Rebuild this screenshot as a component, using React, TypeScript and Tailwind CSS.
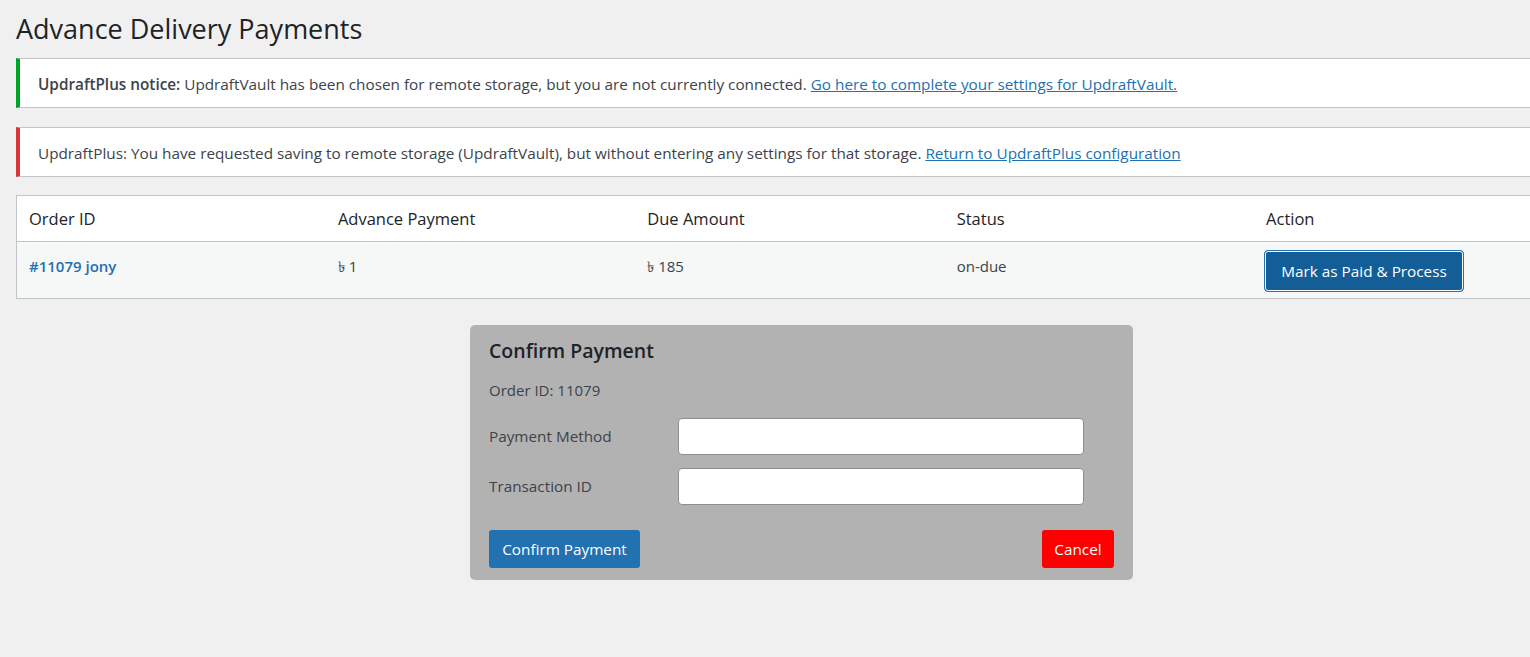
export default function App() {
  const font = { fontFamily: '"Open Sans", "Noto Sans", sans-serif' };
  return (
    <div className="h-[657px] w-[1530px] overflow-hidden bg-[#f0f0f1] text-[#3c434a]" style={font}>
      <div className="w-[1560px] pl-4">
        <h1 className="pt-[11px] text-[27px] leading-[36px] font-normal text-[#1d2327]">
          Advance Delivery Payments
        </h1>

        <div className="mt-[11px] flex h-[50px] items-center border border-l-4 border-[#c3c4c7] border-l-[#00a32a] bg-white pt-[2px] pl-[18px] text-[15.3px]">
          <p>
            <strong className="font-semibold">UpdraftPlus notice:</strong> UpdraftVault has been chosen for remote
            storage, but you are not currently connected.{" "}
            <a href="#" className="text-[#2271b1] underline">
              Go here to complete your settings for UpdraftVault.
            </a>
          </p>
        </div>

        <div className="mt-[19px] flex h-[50px] items-center border border-l-4 border-[#c3c4c7] border-l-[#d63638] bg-white pt-[2px] pl-[18px] text-[15.3px]">
          <p>
            UpdraftPlus: You have requested saving to remote storage (UpdraftVault), but without entering any
            settings for that storage.{" "}
            <a href="#" className="text-[#2271b1] underline">
              Return to UpdraftPlus configuration
            </a>
          </p>
        </div>

        <table className="mt-[18px] w-[1548px] table-fixed border border-[#c3c4c7] bg-white">
          <thead>
            <tr className="h-[46px] border-b border-[#c3c4c7] text-left text-[16.5px] text-[#1d2327]">
              <th className="px-3 pt-[2px] font-normal">Order ID</th>
              <th className="px-3 pt-[2px] font-normal">Advance Payment</th>
              <th className="px-3 pt-[2px] font-normal">Due Amount</th>
              <th className="px-3 pt-[2px] font-normal">Status</th>
              <th className="px-3 pt-[2px] font-normal">Action</th>
            </tr>
          </thead>
          <tbody>
            <tr className="h-[57px] bg-[#f6f7f7] align-top text-[15px]">
              <td className="px-3 pt-[13px]">
                <a href="#" className="font-semibold text-[#2271b1]">
                  #11079 jony
                </a>
              </td>
              <td className="px-3 pt-[13px]">৳ 1</td>
              <td className="px-3 pt-[13px]">৳ 185</td>
              <td className="px-3 pt-[13px]">on-due</td>
              <td className="pt-[8px] pl-[10px]">
                <button
                  type="button"
                  className="h-[42px] w-[200px] rounded-[4px] border border-[#2271b1] bg-[#135e96] text-[15.3px] text-white shadow-[inset_0_0_0_1px_#fff]"
                >
                  Mark as Paid &amp; Process
                </button>
              </td>
            </tr>
          </tbody>
        </table>

        <div className="mt-[26px] ml-[454px] w-[663px] rounded-[5px] bg-[#b2b2b2] px-[19px] pt-[12px] pb-[12px]">
          <h2 className="text-[19.5px] leading-[28px] font-semibold text-[#1d2327]">Confirm Payment</h2>
          <p className="mt-[14px] text-[15px] leading-[22px]">Order ID: 11079</p>
          <div className="mt-[17px] flex items-center">
            <label className="w-[189px] text-[15.3px]">Payment Method</label>
            <input className="h-[37px] w-[406px] rounded-[4px] border border-[#8c8f94] bg-white" />
          </div>
          <div className="mt-[13px] flex items-center">
            <label className="w-[189px] text-[15.3px]">Transaction ID</label>
            <input className="h-[37px] w-[406px] rounded-[4px] border border-[#8c8f94] bg-white" />
          </div>
          <div className="mt-[25px] flex items-center justify-between">
            <button type="button" className="h-[38px] w-[151px] rounded-[3px] bg-[#2271b1] text-[15.3px] text-white">
              Confirm Payment
            </button>
            <button type="button" className="h-[38px] w-[72px] rounded-[3px] bg-[#ff0000] text-[15.3px] text-white">
              Cancel
            </button>
          </div>
        </div>
      </div>
    </div>
  );
}
